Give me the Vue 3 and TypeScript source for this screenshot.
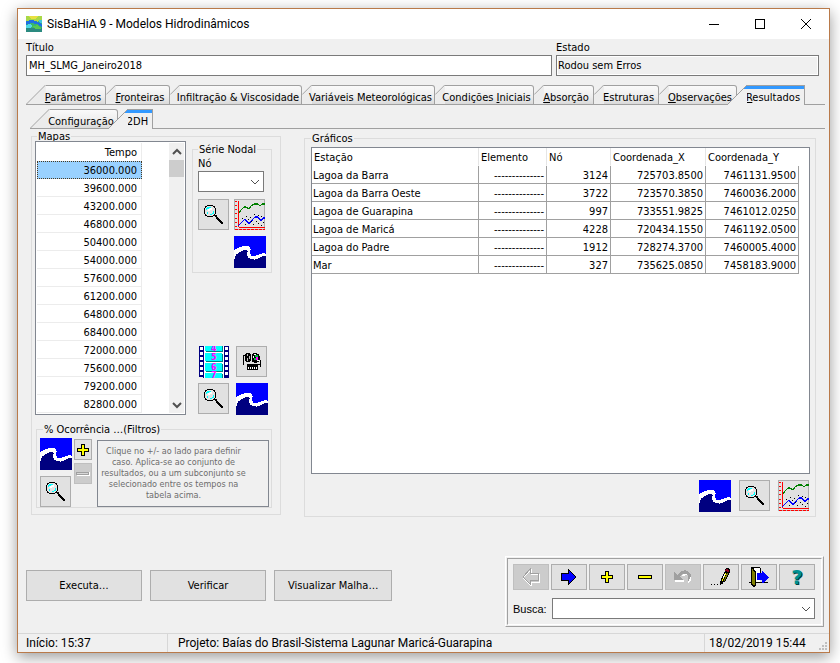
<script setup lang="ts">
import { ref } from 'vue'

interface Tab {
  key: string
  before: string
  accel: string
  after: string
}

interface Station {
  name: string
  element: string
  node: number
  x: string
  y: string
}

const tabs: Tab[] = [
  { key: 'par', before: '', accel: 'P', after: 'arâmetros' },
  { key: 'fro', before: '', accel: 'F', after: 'ronteiras' },
  { key: 'inf', before: 'Infiltração & Viscosidade', accel: '', after: '' },
  { key: 'var', before: 'Variáveis Meteorológicas', accel: '', after: '' },
  { key: 'con', before: 'Condições ', accel: 'I', after: 'niciais' },
  { key: 'abs', before: '', accel: 'A', after: 'bsorção' },
  { key: 'est', before: 'Estruturas', accel: '', after: '' },
  { key: 'obs', before: '', accel: 'O', after: 'bservações' },
  { key: 'res', before: '', accel: 'R', after: 'esultados' },
]
const subTabs: Tab[] = [
  { key: 'cfg', before: 'Configuração', accel: '', after: '' },
  { key: '2dh', before: '2DH', accel: '', after: '' },
]
const activeTab = ref('res')
const activeSub = ref('2dh')

const times: string[] = Array.from({ length: 14 }, (_, i) => `${36000 + i * 3600}.000`)
const selectedTime = ref(times[0])

const dashes = '--------------'
const stations: Station[] = [
  { name: 'Lagoa da Barra', element: dashes, node: 3124, x: '725703.8500', y: '7461131.9500' },
  { name: 'Lagoa da Barra Oeste', element: dashes, node: 3722, x: '723570.3850', y: '7460036.2000' },
  { name: 'Lagoa de Guarapina', element: dashes, node: 997, x: '733551.9825', y: '7461012.0250' },
  { name: 'Lagoa de Maricá', element: dashes, node: 4228, x: '720434.1550', y: '7461192.0500' },
  { name: 'Lagoa do Padre', element: dashes, node: 1912, x: '728274.3700', y: '7460005.4000' },
  { name: 'Mar', element: dashes, node: 327, x: '735625.0850', y: '7458183.9000' },
]

const title = ref('MH_SLMG_Janeiro2018')
const state = ref('Rodou sem Erros')
</script>

<template>
  <svg class="sprites" width="0" height="0" aria-hidden="true">
    <symbol id="i-wave" viewBox="0 0 32 32">
      <rect width="32" height="32" fill="#0000ff" />
      <path d="M0 14H1V13H3V12H5V11H8V10H15V11H16V13H17V14H16V18H17V20H22V19H25V18H28V17H31V18H32V32H0Z" fill="#fff" />
      <path d="M0 23H1V20H2V18H4V17H5V16H7V15H9V14H13V15H14V16H13V20H14V22H16V23H20V24H21V23H24V22H26V21H28V20H32V32H0Z" fill="#000080" />
    </symbol>
    <symbol id="i-lens" viewBox="0 0 31 31">
      <path d="M9 6H15V7H17V9H18V15H17V17H15V18H9V17H7V15H6V9H7V7H9Z" fill="#000" />
      <path d="M9 7H15V8H16V9H17V15H16V16H15V17H9V16H8V15H7V9H8V8H9Z" fill="#e4e4e4" />
      <path d="M9 8H13V9H11V10H9V11H8V9H9ZM15 12H16V15H14V16H12V15H14V14H15ZM9 13H10V15H9Z" fill="#00ffff" />
      <path d="M10 10H12V9H14V11H12V12H10Z" fill="#fff" />
      <path d="M17 16H19V18H20V19H21V20H22V21H23V22H24V23H25V25H23V24H22V23H21V22H20V21H19V20H18V18H17Z" fill="#000" />
    </symbol>
    <symbol id="i-chart" viewBox="0 0 31 31">
      <path d="M4 2H5V29H31V28H4ZM1 2H3V3H1ZM1 6H3V7H1ZM1 10H3V11H1ZM1 14H3V15H1ZM1 19H3V20H1ZM1 23H3V24H1ZM1 27H3V28H1Z" fill="#f00" />
      <path d="M1 30.500H31" stroke="#f00" stroke-dasharray="3 1" />
      <path d="M5 14L7 11L10 8H12L15 10L17 7L20 5H24L26 7L28 5H31" fill="none" stroke="#008000" stroke-width="1.300" />
      <path d="M4 27L7 24L9 22L11 20L14 24H16L19 20L21 18H24L27 22L29 19H31" fill="none" stroke="#0000ff" stroke-width="1.300" />
      <path d="M8 19h1v1h-1zM12 17h1v1h-1zM16 18h1v1h-1zM14 20h1v1h-1zM17 22h1v1h-1zM20 15h1v1h-1zM24 16h1v1h-1zM27 17h1v1h-1zM22 22h1v1h-1zM24 24h1v1h-1zM19 25h1v1h-1zM29 23h1v1h-1zM11 25h1v1h-1zM27 26h1v1h-1z" fill="#000" />
    </symbol>
    <symbol id="i-camera" viewBox="0 0 31 31">
      <path d="M10 7H14V8H15V15H14V16H10V15H9V8H10ZM17 7H21V8H23V10H24V14H23V16H21V17H18V16H16V8H17Z" fill="#000" />
      <path d="M11 8h1v2h-1zM13 10h1v3h-1zM11 12h1v3h-1z" fill="#c0c0c0" />
      <path d="M18 8H20V9H18ZM17 10H18V12H17ZM21 14H23V15H21Z" fill="#fff" />
      <path d="M19 9H22V11H19ZM18 12H20V14H18Z" fill="#00c040" />
      <path d="M20 11H22V14H20Z" fill="#ff00ff" />
      <path d="M7 9h1v10H7zM7 9h2v1H7zM24 14h1v7h-1zM22 18h2v1h-2z" fill="#000" />
      <path d="M11 18H22V24H11Z" fill="#000" />
      <path d="M12 21h1v2h-1zM14 21h1v2h-1zM16 21h1v2h-1zM18 21h1v2h-1zM20 21h1v2h-1z" fill="#fff" />
    </symbol>
    <symbol id="i-plus" viewBox="0 0 14 14">
      <path d="M5 1H9V5H13V9H9V13H5V9H1V5H5Z" fill="#000" />
      <path d="M6 2H8V6H12V8H8V12H6V8H2V6H6Z" fill="#ffff00" />
    </symbol>
    <symbol id="i-minus" viewBox="0 0 14 14">
      <path d="M0 5H14V9H0Z" fill="#000" />
      <path d="M1 6H13V8H1Z" fill="#ffff00" />
    </symbol>
    <symbol id="i-minus-off" viewBox="0 0 14 14">
      <path d="M1 5H14V9H1Z" fill="#fff" />
      <path d="M0 5H13V8H0Z" fill="#a0a0a0" />
      <path d="M1 6H12V7H1Z" fill="#d8d8d8" />
    </symbol>
    <symbol id="i-left" viewBox="0 0 18 18">
      <path d="M9 2V6H17V14H9V18L1 10Z" fill="none" stroke="#fff" />
      <path d="M8 1V5H16V12H8V16L1 9Z" fill="none" stroke="#a0a0a0" />
    </symbol>
    <symbol id="i-right" viewBox="0 0 18 18">
      <path d="M8 1H9V2H10V3H11V4H12V5H13V6H14V7H15V8H16V10H15V11H14V12H13V13H12V14H11V15H10V16H9V17H8V13H1V5H8Z" fill="#000" />
      <path d="M9 3H10V4H11V5H12V6H13V7H14V8H15V10H14V11H13V12H12V13H11V14H10V15H9V12H2V6H9Z" fill="#0000ff" />
    </symbol>
    <symbol id="i-undo" viewBox="0 0 20 18">
      <path d="M10 8C12 5 16 5 17 8C18 11 17 13 15 15M2 13H11" fill="none" stroke="#fff" stroke-width="1.500" />
      <path d="M1 4L4 7C8 2 13 1 16 4C19 7 18 11 14 14C16 10 16 7 13 6C10 5 8 7 7 9L10 12H1Z" fill="#a0a0a0" />
    </symbol>
    <symbol id="i-pencil" viewBox="0 0 20 18">
      <path d="M0 16h1v1H0zM3 16h1v1H3zM6 16h1v1H6z" fill="#000" />
      <path d="M15 0H18V1H19V5H18V7H17V9H16V11H15V13H14V14H12V16H10V17H9V13H10V10H11V8H12V6H13V4H14V1H15Z" fill="#000" />
      <path d="M15 1H17V2H18V4H16V3H14V2H15Z" fill="#900020" />
      <path d="M14 5H15V7H14V9H13V11H12V13H11V11H12V8H13V6H14Z" fill="#ffff00" />
      <path d="M16 5H17V7H16V9H15V11H14V13H13V11H14V8H15V6H16Z" fill="#808000" />
      <path d="M13 6h1v2h-1zM12 8h1v2h-1z" fill="#fff" />
    </symbol>
    <symbol id="i-exit" viewBox="0 0 22 20">
      <path d="M1 15H20V16H1ZM3 0H12V1H13V6H12V1H3Z" fill="#000" />
      <path d="M6 1H12V15H6Z" fill="#fff" />
      <path d="M3 1H5V3H6V4H7V18H6V19H5V18H4V17H3Z" fill="#808000" stroke="#000" stroke-width="1" />
      <path d="M9 6H14V4H15V5H16V6H17V7H18V8H19V9H20V10H21V11H20V12H19V13H18V14H17V15H16V16H14V13H9Z" fill="#0000ff" />
    </symbol>
    <symbol id="i-app" viewBox="0 0 16 16">
      <rect width="16" height="16" fill="#38b86a" />
      <path d="M0 0H16V4L11 6L6 4L0 7Z" fill="#a8d848" />
      <path d="M3 0H12L9 3H5Z" fill="#e8e040" />
      <path d="M0 5L5 4L10 5L16 8V11L11 8L5 7L0 9Z" fill="#2070e0" />
      <path d="M0 9L4 8L7 10L4 12H0Z" fill="#50d8e8" />
      <path d="M0 12H16V16H0Z" fill="#2b8a80" />
      <path d="M7 10L12 9L15 13H9Z" fill="#58c850" />
      <path d="M13 4H16V7H14Z" fill="#40c8d8" />
    </symbol>
    <symbol id="i-down" viewBox="0 0 10 6">
      <path d="M1 1L5 5L9 1" fill="none" stroke="#505050" />
    </symbol>
  </svg>

  <main class="window">
    <header class="titlebar">
      <svg class="app-icon"><use href="#i-app" /></svg>
      <h1>SisBaHiA 9 - Modelos Hidrodinâmicos</h1>
      <div class="winbuttons">
        <button type="button" aria-label="Minimizar"><svg viewBox="0 0 12 12"><path d="M1 6.500H11" /></svg></button>
        <button type="button" aria-label="Maximizar"><svg viewBox="0 0 12 12"><path d="M1.500 1.500H10.500V10.500H1.500Z" /></svg></button>
        <button type="button" aria-label="Fechar"><svg viewBox="0 0 12 12"><path class="smooth" d="M1 1L11 11M11 1L1 11" /></svg></button>
      </div>
    </header>

    <section class="fields">
      <div class="field wide">
        <label for="titulo">Título</label>
        <input id="titulo" v-model="title" type="text" />
      </div>
      <div class="field">
        <label for="estado">Estado</label>
        <input id="estado" v-model="state" type="text" readonly />
      </div>
    </section>

    <nav class="tabbar main-tabs">
      <button
        v-for="t in tabs"
        :key="t.key"
        type="button"
        class="tab"
        :class="{ active: t.key === activeTab }"
        @click="activeTab = t.key"
      >
        <svg class="slope short" viewBox="0 0 10 20"><path class="face" d="M0 10L10 0V20H0Z" /><path class="edge" d="M0 10L10 0" /></svg>
        <svg class="slope long" viewBox="0 0 20 20"><path class="face" d="M0 20L20 0V20Z" /><path class="accent" d="M16 4L19 1H20V4Z" /><path class="edge" d="M0 20L20 0" /></svg>
        <span class="cap"><span>{{ t.before }}<u>{{ t.accel }}</u>{{ t.after }}</span></span>
      </button>
      <span class="rail"></span>
    </nav>

    <nav class="tabbar sub-tabs">
      <button
        v-for="t in subTabs"
        :key="t.key"
        type="button"
        class="tab"
        :class="{ active: t.key === activeSub }"
        @click="activeSub = t.key"
      >
        <svg class="slope short" viewBox="0 0 10 20"><path class="face" d="M0 10L10 0V20H0Z" /><path class="edge" d="M0 10L10 0" /></svg>
        <svg class="slope long" viewBox="0 0 20 20"><path class="face" d="M0 20L20 0V20Z" /><path class="accent" d="M16 4L19 1H20V4Z" /><path class="edge" d="M0 20L20 0" /></svg>
        <span class="cap"><span>{{ t.before }}</span></span>
      </button>
      <span class="rail"></span>
    </nav>

    <section class="panels">
      <fieldset class="maps">
        <legend>Mapas</legend>
        <div class="maps-top">
          <div class="timelist">
            <table>
              <thead>
                <tr><th scope="col">Tempo</th></tr>
              </thead>
              <tbody>
                <tr v-for="t in times" :key="t" :class="{ selected: t === selectedTime }" @click="selectedTime = t">
                  <td>{{ t }}</td>
                </tr>
              </tbody>
            </table>
            <div class="scrollbar">
              <button type="button" aria-label="Rolar para cima"><svg viewBox="0 0 10 8"><path d="M1 6L5 2L9 6" /></svg></button>
              <div class="thumb"></div>
              <button type="button" class="end" aria-label="Rolar para baixo"><svg viewBox="0 0 10 8"><path d="M1 2L5 6L9 2" /></svg></button>
            </div>
          </div>
          <div class="maps-side">
            <fieldset class="serie">
              <legend>Série Nodal</legend>
              <label for="no">Nó</label>
              <div class="combo">
                <select id="no"><option></option></select>
                <svg><use href="#i-down" /></svg>
              </div>
              <div class="serie-icons">
                <button type="button" class="tool" aria-label="Ver série"><svg><use href="#i-lens" /></svg></button>
                <button type="button" class="tool" aria-label="Gráfico da série"><svg><use href="#i-chart" /></svg></button>
                <button type="button" class="wave" aria-label="Gerar série"><svg><use href="#i-wave" /></svg></button>
              </div>
            </fieldset>
            <div class="map-icons">
              <button type="button" class="wave" aria-label="Animação">
                <svg viewBox="0 0 32 32">
                  <path d="M1 0H31V32H5V31H1Z" fill="#000080" />
                  <rect x="6" width="20" height="32" fill="#fff" />
                  <path d="M2 1h3v3H2zM2 6h3v3H2zM2 11h3v3H2zM2 16h3v3H2zM2 21h3v3H2zM2 26h3v3H2zM27 1h3v3h-3zM27 6h3v3h-3zM27 11h3v3h-3zM27 16h3v3h-3zM27 21h3v3h-3zM27 26h3v3h-3z" fill="#fff" />
                  <path d="M8 0H25V6H8ZM8 8H25V16H8ZM8 18H25V26H8ZM8 28H25V32H8Z" fill="#008080" />
                  <path d="M7 0H24V5H7ZM7 7H24V15H7ZM7 17H24V25H7ZM7 27H24V32H7Z" fill="#00ffff" />
                  <g class="film-digits">
                    <text x="13" y="5">4</text>
                    <text x="13" y="14">5</text>
                    <text x="13" y="24">6</text>
                    <text x="13" y="32">7</text>
                  </g>
                </svg>
              </button>
              <button type="button" class="tool" aria-label="Gravar animação"><svg><use href="#i-camera" /></svg></button>
              <button type="button" class="tool" aria-label="Ver mapa"><svg><use href="#i-lens" /></svg></button>
              <button type="button" class="wave" aria-label="Gerar mapa"><svg><use href="#i-wave" /></svg></button>
            </div>
          </div>
        </div>
        <fieldset class="filters">
          <legend>% Ocorrência …(Filtros)</legend>
          <div class="filters-body">
            <div class="stack">
              <button type="button" class="wave" aria-label="Gerar ocorrência"><svg><use href="#i-wave" /></svg></button>
              <button type="button" class="tool" aria-label="Ver ocorrência"><svg><use href="#i-lens" /></svg></button>
            </div>
            <div class="signs">
              <button type="button" aria-label="Adicionar caso"><svg><use href="#i-plus" /></svg></button>
              <button type="button" disabled aria-label="Remover caso"><svg><use href="#i-minus-off" /></svg></button>
            </div>
            <p class="hint">
              Clique no +/- ao lado para definir<br />caso. Aplica-se ao conjunto de<br />resultados, ou a um subconjunto se<br />selecionado entre os tempos na<br />tabela acima.
            </p>
          </div>
        </fieldset>
      </fieldset>

      <fieldset class="graphs">
        <legend>Gráficos</legend>
        <div class="grid-box">
          <table>
            <colgroup>
              <col /><col class="c-elem" /><col class="c-node" /><col class="c-x" /><col class="c-y" />
            </colgroup>
            <thead>
              <tr>
                <th scope="col">Estação</th>
                <th scope="col">Elemento</th>
                <th scope="col">Nó</th>
                <th scope="col">Coordenada_X</th>
                <th scope="col">Coordenada_Y</th>
              </tr>
            </thead>
            <tbody>
              <tr v-for="s in stations" :key="s.name">
                <td class="name">{{ s.name }}</td>
                <td>{{ s.element }}</td>
                <td>{{ s.node }}</td>
                <td>{{ s.x }}</td>
                <td>{{ s.y }}</td>
              </tr>
            </tbody>
          </table>
        </div>
        <div class="graph-icons">
          <button type="button" class="wave" aria-label="Gerar gráficos"><svg><use href="#i-wave" /></svg></button>
          <button type="button" class="tool" aria-label="Ver dados"><svg><use href="#i-lens" /></svg></button>
          <button type="button" class="tool" aria-label="Ver gráficos"><svg><use href="#i-chart" /></svg></button>
        </div>
      </fieldset>
    </section>

    <section class="actions">
      <div class="commands">
        <button type="button">Executa…</button>
        <button type="button">Verificar</button>
        <button type="button">Visualizar Malha…</button>
      </div>
      <div class="navigator">
        <div class="nav-inner">
          <div class="nav-buttons">
            <button type="button" disabled aria-label="Anterior"><svg class="s18"><use href="#i-left" /></svg></button>
            <button type="button" aria-label="Próximo"><svg class="s18"><use href="#i-right" /></svg></button>
            <button type="button" aria-label="Inserir"><svg class="s14"><use href="#i-plus" /></svg></button>
            <button type="button" aria-label="Excluir"><svg class="s14"><use href="#i-minus" /></svg></button>
            <button type="button" disabled aria-label="Desfazer"><svg class="s20"><use href="#i-undo" /></svg></button>
            <button type="button" aria-label="Editar"><svg class="s20"><use href="#i-pencil" /></svg></button>
            <button type="button" aria-label="Sair"><svg class="s22"><use href="#i-exit" /></svg></button>
            <button type="button" class="help">?</button>
          </div>
          <div class="search">
            <label for="busca">Busca:</label>
            <div class="combo">
              <select id="busca"><option></option></select>
              <svg><use href="#i-down" /></svg>
            </div>
          </div>
        </div>
      </div>
    </section>

    <footer class="statusbar">
      <span class="start">Início: 15:37</span>
      <span class="project">Projeto: Baías do Brasil-Sistema Lagunar Maricá-Guarapina</span>
      <time>18/02/2019 15:44</time>
      <svg class="grip" viewBox="0 0 9 9"><path d="M6 0h2v2H6zM3 3h2v2H3zM6 3h2v2H6zM0 6h2v2H0zM3 6h2v2H3zM6 6h2v2H6z" /></svg>
    </footer>
  </main>
</template>

<style>
body {
  background: #fff;
}
</style>

<style scoped>
* {
  box-sizing: border-box;
}
.sprites {
  position: absolute;
}
.film-digits {
  fill: #ff00ff;
  font: bold 8px "DejaVu Sans", sans-serif;
}
svg {
  display: block;
  shape-rendering: crispEdges;
}
button,
input,
select {
  font: inherit;
  color: inherit;
  margin: 0;
  padding: 0;
  border: 0;
  border-radius: 0;
  background: none;
}
fieldset {
  min-width: 0;
  margin: 0;
  padding: 0;
  border: 1px solid #dcdcdc;
}
legend {
  height: 10px;
  padding: 0 1px;
  line-height: 12px;
  white-space: nowrap;
}
table {
  border-collapse: separate;
  border-spacing: 0;
}
th {
  font-weight: normal;
}

.window {
  margin: 8px 10px 10px 17px;
  border: 1px solid #b97a4a;
  background: #f0f0f0;
  box-shadow: 0 4px 14px rgba(0, 0, 0, 0.4);
  color: #000;
  font: 11px/14px "DejaVu Sans Condensed", "DejaVu Sans", sans-serif;
}

.titlebar {
  display: flex;
  align-items: center;
  height: 30px;
  padding-left: 8px;
  background: #fff;
}
.app-icon {
  width: 16px;
  height: 16px;
}
.titlebar h1 {
  flex: 1;
  margin: 0 0 0 5px;
  font: 12px/16px Roboto, sans-serif;
}
.winbuttons {
  display: flex;
}
.winbuttons button {
  width: 46px;
  height: 30px;
  display: grid;
  place-items: center;
}
.winbuttons svg {
  width: 12px;
  height: 12px;
  fill: none;
  stroke: #000;
}
.smooth {
  shape-rendering: auto;
}

.fields {
  display: flex;
  gap: 4px;
  padding: 2px 10px 0 8px;
}
.field {
  flex: 1;
}
.field.wide {
  flex: 2;
}
.field label {
  display: block;
}
.field input {
  display: block;
  width: 100%;
  height: 21px;
  padding: 0 2px;
  border: 1px solid #7a7a7a;
  background: #fff;
}
.field input[readonly] {
  padding: 0 1px;
  background: #f0f0f0;
  box-shadow: inset 0 0 0 1px #fff;
}

.tabbar {
  display: grid;
  height: 20px;
}
.main-tabs {
  grid-template-columns: 80fr 64fr 132fr 133fr 99fr 60fr 65fr 78fr 68fr 20fr;
  margin: 9px 4px 0 8px;
}
.sub-tabs {
  grid-template-columns: 88px 35px 1fr;
  margin: 4px 4px 0 12px;
}
.rail {
  border-bottom: 1px solid #a0a0a0;
}
.tab {
  display: flex;
  height: 20px;
  min-width: 0;
}
.slope {
  flex: none;
  height: 20px;
  shape-rendering: auto;
}
.short {
  width: 10px;
}
.long {
  width: 20px;
  display: none;
}
.tab:first-child .short,
.tab.active .short {
  display: none;
}
.tab:first-child .long,
.tab.active .long {
  display: block;
}
.tab.active .long {
  margin-left: -10px;
  position: relative;
}
.face {
  fill: #ececec;
}
.edge {
  fill: none;
  stroke: #a0a0a0;
}
.accent {
  display: none;
  fill: #3399ff;
}
.active .accent {
  display: block;
}
.active .face {
  fill: #f0f0f0;
}
.tab:not(.active) .slope {
  border-bottom: 1px solid #a0a0a0;
}
.cap {
  display: flex;
  flex: 1;
  justify-content: center;
  min-width: 0;
  height: 20px;
  padding-right: 5px;
  border: 1px solid #a0a0a0;
  border-left: 0;
  border-radius: 0 3px 0 0;
  background: linear-gradient(#fafafa, #ededed 60%, #dadada);
  line-height: 23px;
  white-space: pre;
}
.active .cap {
  border-bottom: 0;
  border-radius: 0;
  background: linear-gradient(#3399ff 3px, #f0f0f0 3px);
}

.panels {
  display: flex;
  align-items: stretch;
  gap: 23px;
  padding: 2px 13px 0 13px;
}
.maps {
  flex: none;
  width: 250px;
  margin-bottom: 2px;
  padding: 0 8px 6px 3px;
}
.maps > legend {
  margin-left: 2px;
}
.maps-top {
  display: flex;
  gap: 6px;
}
.timelist {
  display: flex;
  justify-content: space-between;
  width: 151px;
  height: 274px;
  padding: 1px;
  border: 1px solid #828790;
  background: #fff;
}
.timelist table {
  width: 105px;
  height: 252px;
}
.timelist th,
.timelist td {
  height: 18px;
  padding: 2px 4px 0 0;
  border-right: 1px solid #ececec;
  border-bottom: 1px solid #ececec;
  line-height: 15px;
  text-align: right;
}
.timelist th {
  border-bottom-color: #fff;
}
.timelist .selected td {
  padding-top: 1px;
  border: 1px dotted #4a3a20;
  background: #99d1ff;
}
.scrollbar {
  display: flex;
  flex-direction: column;
  width: 15px;
  background: #f0f0f0;
}
.scrollbar button {
  display: grid;
  place-items: center;
  height: 17px;
}
.scrollbar svg {
  width: 10px;
  height: 8px;
  fill: none;
  stroke: #505050;
  stroke-width: 2;
  shape-rendering: auto;
}
.thumb {
  height: 17px;
  background: #cdcdcd;
}
.end {
  margin-top: auto;
}
.maps-side {
  flex: 1;
  display: flex;
  flex-direction: column;
  justify-content: space-between;
  padding-top: 3px;
}
.serie {
  padding: 3px 5px 4px;
}
.serie label {
  display: block;
}
.combo {
  display: grid;
  align-items: center;
  flex: 1;
}
.combo select {
  grid-area: 1 / 1;
  width: 100%;
  height: 21px;
  border: 1px solid #7a7a7a;
  background: #fff;
  appearance: none;
}
.combo svg {
  grid-area: 1 / 1;
  justify-self: end;
  width: 10px;
  height: 6px;
  margin-right: 4px;
  pointer-events: none;
  shape-rendering: auto;
}
.serie .combo {
  width: 66px;
}
.serie-icons {
  display: grid;
  grid-template-columns: 32px 32px;
  gap: 6px 4px;
  margin-top: 7px;
}
.serie-icons .wave {
  grid-column: 2;
}
.tool {
  width: 31px;
  height: 31px;
  border: 1px solid #adadad;
  background: #e1e1e1;
}
.tool svg {
  width: 31px;
  height: 31px;
  margin: -1px;
}
.wave,
.wave svg {
  width: 32px;
  height: 32px;
}
.map-icons {
  display: grid;
  grid-template-columns: 32px 32px;
  gap: 5px 6px;
  padding-left: 6px;
}
.filters {
  margin: 9px 0 0 1px;
  padding-left: 3px;
}
.filters legend {
  margin-left: 3px;
}
.filters-body {
  display: flex;
  gap: 2px;
  padding: 4px 2px 0 0;
}
.stack {
  display: grid;
  gap: 6px;
}
.signs {
  display: flex;
  flex-direction: column;
  gap: 3px;
  margin-right: 3px;
  padding-top: 1px;
}
.signs button {
  display: grid;
  place-items: center;
  width: 18px;
  height: 21px;
  border: 1px solid #adadad;
  background: #e1e1e1;
}
.signs svg {
  width: 14px;
  height: 14px;
}
.signs button:disabled {
  background: #ccc;
  border-color: #bfbfbf;
}
.hint {
  flex: 1;
  margin: 2px 0 0;
  padding: 5px 19px 0 0;
  border: 1px solid #828790;
  color: #6d6d6d;
  font-size: 9px;
  line-height: 11px;
  text-align: center;
  white-space: nowrap;
}

.graphs {
  flex: 1;
  display: flex;
  flex-direction: column;
  margin-top: 2px;
  padding: 4px 5px 4px 6px;
}
.grid-box {
  flex: 1;
  padding-right: 10px;
  border: 1px solid #828790;
  background: #fff;
}
.grid-box table {
  width: 100%;
  table-layout: fixed;
}
.c-elem {
  width: 68px;
}
.c-node {
  width: 64px;
}
.c-x {
  width: 95px;
}
.c-y {
  width: 93px;
}
.grid-box th,
.grid-box td {
  height: 18px;
  border-right: 1px solid #a0a0a0;
  border-bottom: 1px solid #a0a0a0;
  line-height: 15px;
  white-space: nowrap;
}
.grid-box th {
  padding: 2px 0 0 2px;
  border-right-color: #e5e5e5;
  border-bottom-color: #fff;
  text-align: left;
}
.grid-box th:last-child {
  border-right-color: #fff;
}
.grid-box td {
  padding: 2px 2px 0 0;
  text-align: right;
}
.grid-box .name {
  padding: 2px 0 0 1px;
  text-align: left;
}
.graph-icons {
  display: flex;
  justify-content: flex-end;
  gap: 8px;
  margin-top: 6px;
  padding-right: 1px;
}

.actions {
  display: flex;
  justify-content: space-between;
  align-items: flex-start;
  padding: 39px 5px 6px 8px;
}
.commands {
  display: flex;
  gap: 8px;
  padding-top: 14px;
}
.commands button {
  min-width: 116px;
  height: 31px;
  padding: 0 13px;
  border: 1px solid #adadad;
  background: #e1e1e1;
}
.navigator {
  border: 1px solid;
  border-color: #fff #a0a0a0 #a0a0a0 #fff;
  padding: 1px;
}
.nav-inner {
  border: 1px solid;
  border-color: #a0a0a0 #fff #fff #a0a0a0;
  padding: 5px 6px 5px 5px;
}
.nav-buttons {
  display: flex;
  gap: 2px;
}
.nav-buttons button {
  display: grid;
  place-items: center;
  width: 36px;
  height: 26px;
  border: 1px solid #adadad;
  background: #e1e1e1;
}
.nav-buttons button:disabled {
  border-color: #bfbfbf;
  background: #ccc;
}
.s14 {
  width: 14px;
  height: 14px;
}
.s18 {
  width: 18px;
  height: 18px;
}
.s20 {
  width: 20px;
  height: 18px;
}
.s22 {
  width: 22px;
  height: 20px;
}
.nav-buttons .help {
  color: #009090;
  font: bold 20px/20px "DejaVu Sans", sans-serif;
  text-shadow: 1px 1px 0 #004040;
}
.search {
  display: flex;
  align-items: center;
  gap: 7px;
  margin-top: 8px;
}
.search label {
  width: 32px;
  font-family: "Liberation Sans", sans-serif;
}

.statusbar {
  display: flex;
  align-items: center;
  height: 19px;
  border-top: 1px solid #d7d7d7;
  font: 12px/18px Roboto, sans-serif;
}
.start {
  width: 150px;
  padding-left: 8px;
  border-right: 1px solid #d7d7d7;
}
.project {
  flex: 1;
  padding-left: 10px;
}
.statusbar time {
  width: 115px;
  padding-left: 4px;
  border-left: 1px solid #d7d7d7;
}
.grip {
  align-self: flex-end;
  width: 9px;
  height: 9px;
  margin: 0 1px 1px 0;
  fill: #bfbfbf;
}
</style>
